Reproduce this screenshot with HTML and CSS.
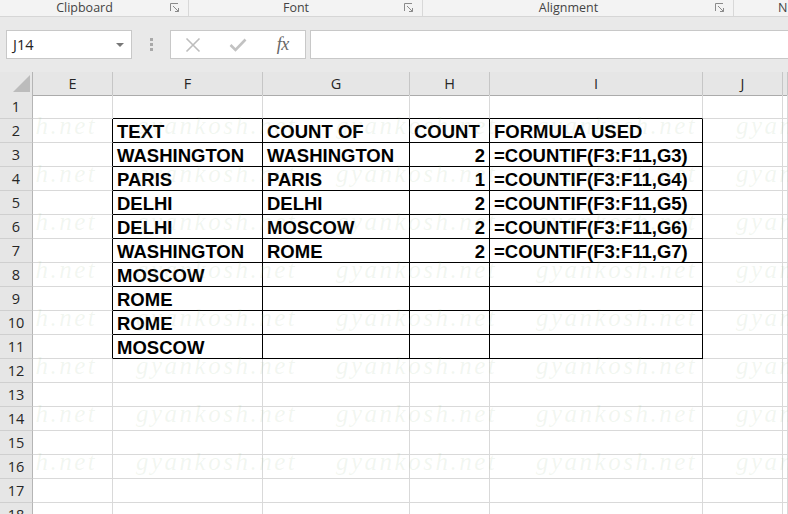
FILE: index.html
```html
<!DOCTYPE html>
<html>
<head>
<meta charset="utf-8">
<link rel="stylesheet" href="styles.css">
</head>
<body>
<div class="ribbon">
  <div class="grp g1"><span class="glabel">Clipboard</span><span class="launch"><svg width="10" height="10" viewBox="0 0 10 10"><path d="M0.5 8V0.5H8" fill="none" stroke="#8a8a8a"/><path d="M3 3L8.5 8.5M5 8.5H8.5V5" fill="none" stroke="#8a8a8a"/></svg></span></div>
  <div class="grp g2"><span class="glabel">Font</span><span class="launch"><svg width="10" height="10" viewBox="0 0 10 10"><path d="M0.5 8V0.5H8" fill="none" stroke="#8a8a8a"/><path d="M3 3L8.5 8.5M5 8.5H8.5V5" fill="none" stroke="#8a8a8a"/></svg></span></div>
  <div class="grp g3"><span class="glabel">Alignment</span><span class="launch"><svg width="10" height="10" viewBox="0 0 10 10"><path d="M0.5 8V0.5H8" fill="none" stroke="#8a8a8a"/><path d="M3 3L8.5 8.5M5 8.5H8.5V5" fill="none" stroke="#8a8a8a"/></svg></span></div>
  <div class="grp g4"><span class="glabel4">Number</span></div>
</div>
<div class="fwrap">
  <div class="fbar">
    <div class="namebox"><span>J14</span><svg class="dd" width="8" height="4" viewBox="0 0 8 4"><path d="M0 0H8L4 4Z" fill="#777"/></svg></div>
    <div class="grip"><i></i><i></i><i></i></div>
    <div class="fbtns">
      <span class="fbtn"><svg width="16" height="16" viewBox="0 0 16 16"><path d="M1.5 1.5L14.5 14.5M14.5 1.5L1.5 14.5" stroke="#bdbdbd" stroke-width="1.6" fill="none"/></svg></span>
      <span class="fbtn"><svg width="18" height="14" viewBox="0 0 18 14"><path d="M1.5 7L6.5 12L16.5 1.5" stroke="#c2c2c2" stroke-width="2.6" fill="none"/></svg></span>
      <span class="fbtn fx">fx</span>
    </div>
    <div class="finput"></div>
  </div>
</div>
<div class="sheet">
  <div class="row hdr">
    <div class="corner"><svg width="33" height="23" viewBox="0 0 33 23"><path d="M30 3V20H13Z" fill="#bcbcbc"/></svg></div>
    <div class="ch">E</div><div class="ch">F</div><div class="ch">G</div><div class="ch">H</div><div class="ch">I</div><div class="ch">J</div><div class="ch"></div>
  </div>
  <div class="row"><div class="rh">1</div><div class="c"></div><div class="c tt"></div><div class="c tt"></div><div class="c tt"></div><div class="c tt"></div><div class="c"></div><div class="c"></div></div>
  <div class="row"><div class="rh">2</div><div class="c tl"></div><div class="c t">TEXT</div><div class="c t">COUNT OF</div><div class="c t">COUNT</div><div class="c t">FORMULA USED</div><div class="c"></div><div class="c"></div></div>
  <div class="row"><div class="rh">3</div><div class="c tl"></div><div class="c t">WASHINGTON</div><div class="c t">WASHINGTON</div><div class="c t num">2</div><div class="c t">=COUNTIF(F3:F11,G3)</div><div class="c"></div><div class="c"></div></div>
  <div class="row"><div class="rh">4</div><div class="c tl"></div><div class="c t">PARIS</div><div class="c t">PARIS</div><div class="c t num">1</div><div class="c t">=COUNTIF(F3:F11,G4)</div><div class="c"></div><div class="c"></div></div>
  <div class="row"><div class="rh">5</div><div class="c tl"></div><div class="c t">DELHI</div><div class="c t">DELHI</div><div class="c t num">2</div><div class="c t">=COUNTIF(F3:F11,G5)</div><div class="c"></div><div class="c"></div></div>
  <div class="row"><div class="rh">6</div><div class="c tl"></div><div class="c t">DELHI</div><div class="c t">MOSCOW</div><div class="c t num">2</div><div class="c t">=COUNTIF(F3:F11,G6)</div><div class="c"></div><div class="c"></div></div>
  <div class="row"><div class="rh">7</div><div class="c tl"></div><div class="c t">WASHINGTON</div><div class="c t">ROME</div><div class="c t num">2</div><div class="c t">=COUNTIF(F3:F11,G7)</div><div class="c"></div><div class="c"></div></div>
  <div class="row"><div class="rh">8</div><div class="c tl"></div><div class="c t">MOSCOW</div><div class="c t"></div><div class="c t"></div><div class="c t"></div><div class="c"></div><div class="c"></div></div>
  <div class="row"><div class="rh">9</div><div class="c tl"></div><div class="c t">ROME</div><div class="c t"></div><div class="c t"></div><div class="c t"></div><div class="c"></div><div class="c"></div></div>
  <div class="row"><div class="rh">10</div><div class="c tl"></div><div class="c t">ROME</div><div class="c t"></div><div class="c t"></div><div class="c t"></div><div class="c"></div><div class="c"></div></div>
  <div class="row"><div class="rh">11</div><div class="c tl"></div><div class="c t">MOSCOW</div><div class="c t"></div><div class="c t"></div><div class="c t"></div><div class="c"></div><div class="c"></div></div>
  <div class="row"><div class="rh">12</div><div class="c"></div><div class="c"></div><div class="c"></div><div class="c"></div><div class="c"></div><div class="c"></div><div class="c"></div></div>
  <div class="row"><div class="rh">13</div><div class="c"></div><div class="c"></div><div class="c"></div><div class="c"></div><div class="c"></div><div class="c"></div><div class="c"></div></div>
  <div class="row"><div class="rh">14</div><div class="c"></div><div class="c"></div><div class="c"></div><div class="c"></div><div class="c"></div><div class="c"></div><div class="c"></div></div>
  <div class="row"><div class="rh">15</div><div class="c"></div><div class="c"></div><div class="c"></div><div class="c"></div><div class="c"></div><div class="c"></div><div class="c"></div></div>
  <div class="row"><div class="rh">16</div><div class="c"></div><div class="c"></div><div class="c"></div><div class="c"></div><div class="c"></div><div class="c"></div><div class="c"></div></div>
  <div class="row"><div class="rh">17</div><div class="c"></div><div class="c"></div><div class="c"></div><div class="c"></div><div class="c"></div><div class="c"></div><div class="c"></div></div>
  <div class="row"><div class="rh">18</div><div class="c"></div><div class="c"></div><div class="c"></div><div class="c"></div><div class="c"></div><div class="c"></div><div class="c"></div></div>
  <div class="wm" aria-hidden="true">
    <div class="wmgrid">
      <span>gyankosh.net</span><span>gyankosh.net</span><span>gyankosh.net</span><span>gyankosh.net</span><span>gyankosh.net</span>
      <span>gyankosh.net</span><span>gyankosh.net</span><span>gyankosh.net</span><span>gyankosh.net</span><span>gyankosh.net</span>
      <span>gyankosh.net</span><span>gyankosh.net</span><span>gyankosh.net</span><span>gyankosh.net</span><span>gyankosh.net</span>
      <span>gyankosh.net</span><span>gyankosh.net</span><span>gyankosh.net</span><span>gyankosh.net</span><span>gyankosh.net</span>
      <span>gyankosh.net</span><span>gyankosh.net</span><span>gyankosh.net</span><span>gyankosh.net</span><span>gyankosh.net</span>
      <span>gyankosh.net</span><span>gyankosh.net</span><span>gyankosh.net</span><span>gyankosh.net</span><span>gyankosh.net</span>
      <span>gyankosh.net</span><span>gyankosh.net</span><span>gyankosh.net</span><span>gyankosh.net</span><span>gyankosh.net</span>
      <span>gyankosh.net</span><span>gyankosh.net</span><span>gyankosh.net</span><span>gyankosh.net</span><span>gyankosh.net</span>
    </div>
  </div>
</div>
</body>
</html>
```
FILE: styles.css
```css
html, body {
  margin: 0;
  padding: 0;
  background: #ffffff;
  overflow: hidden;
}
body {
  width: 788px;
  height: 514px;
  font-family: "Open Sans", "Noto Sans", sans-serif;
}
.ribbon {
  display: flex;
  height: 16px;
  background: #f3f3f3;
  border-bottom: 1px solid #d6d6d6;
}
.grp {
  display: flex;
  align-items: center;
  height: 16px;
  border-right: 1px solid #d8d8d8;
  box-sizing: border-box;
}
.g1 { width: 189px; }
.g2 { width: 234px; }
.g3 { width: 311px; }
.g4 { flex: 1; border-right: none; overflow: hidden; }
.glabel {
  flex: 1;
  text-align: center;
  font-size: 12.5px;
  line-height: 16px;
  color: #444;
}
.glabel4 {
  padding-left: 44px;
  font-size: 12.5px;
  line-height: 16px;
  color: #444;
  white-space: nowrap;
}
.launch {
  width: 18px;
  display: flex;
  justify-content: flex-start;
  padding-left: 1px;
  padding-top: 3px;
  align-self: flex-start;
}
.fwrap {
  background: #e9e9e9;
  padding: 13px 0;
}
.fbar {
  display: flex;
  height: 29px;
  padding-left: 6px;
}
.namebox {
  width: 126px;
  box-sizing: border-box;
  background: #fff;
  border: 1px solid #c8c8c8;
  display: flex;
  align-items: center;
  justify-content: space-between;
  padding: 0 7px 0 6px;
  font-size: 14.5px;
  color: #222;
}
.dd { margin-top: 1px; }
.grip {
  width: 38px;
  display: flex;
  flex-direction: column;
  align-items: center;
  justify-content: center;
  gap: 2px;
}
.grip i {
  display: block;
  width: 3px;
  height: 3px;
  background: #a9a9a9;
}
.fbtns {
  width: 136px;
  box-sizing: border-box;
  background: #fff;
  border: 1px solid #c8c8c8;
  display: flex;
  align-items: center;
}
.fbtn {
  width: 45px;
  display: flex;
  justify-content: center;
  align-items: center;
}
.fx {
  font-family: "Liberation Serif", "DejaVu Serif", serif;
  font-style: italic;
  font-size: 18px;
  color: #666;
  letter-spacing: -0.5px;
}
.finput {
  flex: 1;
  margin-left: 4px;
  background: #fff;
  border: 1px solid #c8c8c8;
  border-right: none;
}
.sheet {
  position: relative;
}
.row {
  display: grid;
  grid-template-columns: 33px 80px 150px 147px 80px 213px 80px 1fr;
  height: 24px;
}
.hdr {
  height: 23px;
}
.corner {
  background: #e6e6e6;
  border-right: 1px solid #b5b5b5;
  border-bottom: 1px solid #ababab;
  box-sizing: border-box;
}
.corner svg { display: block; }
.ch {
  background: #e6e6e6;
  border-right: 1px solid #c6c6c6;
  border-bottom: 1px solid #ababab;
  box-sizing: border-box;
  text-align: center;
  font-size: 14.5px;
  line-height: 23px;
  color: #262626;
}
.rh {
  background: #e6e6e6;
  border-right: 1px solid #b5b5b5;
  border-bottom: 1px solid #cfcfcf;
  box-sizing: border-box;
  text-align: center;
  font-size: 14.5px;
  line-height: 23px;
  color: #262626;
}
.c {
  border-right: 1px solid #d9d9d9;
  border-bottom: 1px solid #d9d9d9;
  box-sizing: border-box;
  font-family: "Liberation Sans", Arial, sans-serif;
  font-weight: bold;
  font-size: 18.5px;
  line-height: 23px;
  padding: 1px 0 0 4px;
  color: #000;
  white-space: nowrap;
  overflow: hidden;
}
.t {
  border-right-color: #000;
  border-bottom-color: #000;
}
.tt {
  border-bottom-color: #000;
}
.tl {
  border-right-color: #000;
}
.num {
  text-align: right;
  padding-right: 4px;
}
.wm {
  position: absolute;
  left: 33px;
  top: 23px;
  right: 0;
  bottom: 0;
  overflow: hidden;
  pointer-events: none;
}
.wmgrid {
  display: grid;
  grid-template-columns: repeat(5, 200px);
  grid-auto-rows: 48px;
  margin-left: -97px;
  margin-top: 7px;
}
.wmgrid span {
  font-family: "Liberation Serif", "DejaVu Serif", serif;
  font-style: italic;
  font-size: 25px;
  letter-spacing: 2.5px;
  line-height: 48px;
  color: rgba(150, 185, 140, 0.13);
  white-space: nowrap;
}
```
